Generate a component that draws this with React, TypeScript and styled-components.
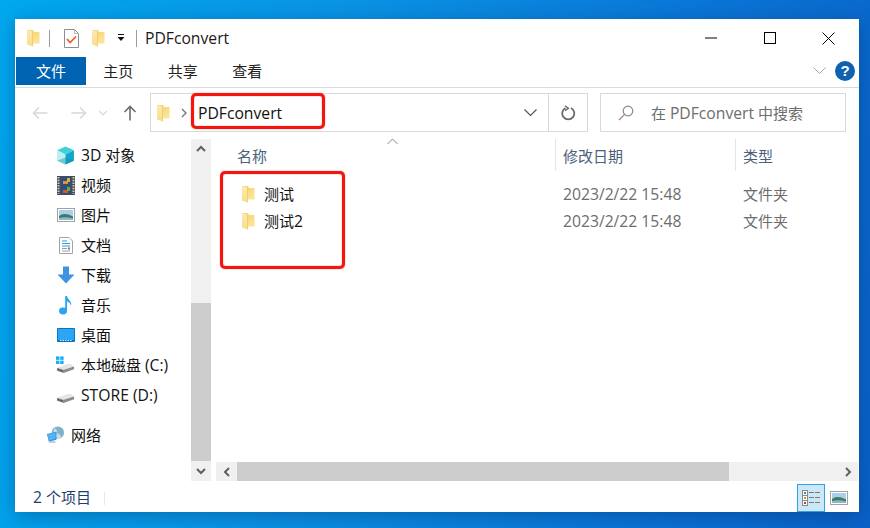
import React from 'react';
import styled, { createGlobalStyle } from 'styled-components';

const GlobalStyle = createGlobalStyle`
  html, body {
    margin: 0;
    padding: 0;
    width: 870px;
    height: 528px;
    overflow: hidden;
  }
  body {
    font-family: "Open Sans", "Noto Sans CJK SC", sans-serif;
    font-size: 15px;
    line-height: 20px;
    color: #000;
    background: linear-gradient(100deg, #00a8ee 0%, #0a94e4 35%, #0a78d8 70%, #0a62c8 100%);
  }
`;

const Desktop = styled.div`
  width: 870px;
  height: 528px;
  box-sizing: border-box;
  padding: 19px 11px 16px 15px;
  display: flex;
`;

const Window = styled.div`
  position: relative;
  flex: 1;
  background: #fff;
  display: flex;
  flex-direction: column;
  box-shadow: 0 4px 18px rgba(0, 30, 80, 0.35);
`;

// Segoe runs wider than Open Sans, so latin runs get a little more size than the CJK around them
const Latin = styled.span`
  font-size: 15.7px;
`;

const TitleBar = styled.div`
  height: 38px;
  display: flex;
  align-items: center;
  padding-left: 11px;
  padding-right: 1.5px;
`;

const QuickIcon = styled.span<{ $ml?: number }>`
  display: flex;
  margin-left: ${(p) => p.$ml ?? 0}px;
`;

const TitleSep = styled.span<{ $ml: number }>`
  width: 1px;
  height: 17px;
  background: #9a9a9a;
  margin-left: ${(p) => p.$ml}px;
`;

const TitleText = styled.span`
  margin-left: 8px;
  font-size: 15.7px;
  color: #1a1a1a;
  flex: 1;
`;

const WindowButton = styled.div`
  width: 58.5px;
  height: 38px;
  display: flex;
  align-items: center;
  justify-content: center;
`;

const Ribbon = styled.div`
  height: 31px;
  box-sizing: border-box;
  display: flex;
  align-items: flex-start;
  border-bottom: 1px solid #dadada;
  padding-left: 1px;
`;

const FileTab = styled.div`
  width: 70px;
  height: 28px;
  background: #0063b1;
  color: #fff;
  display: flex;
  align-items: center;
  justify-content: center;
`;

const RibbonTab = styled.div`
  width: 64.5px;
  height: 28px;
  display: flex;
  align-items: center;
  justify-content: center;
  color: #222;
`;

const RibbonRight = styled.div`
  margin-left: auto;
  height: 28px;
  display: flex;
  align-items: center;
  gap: 9px;
  padding-right: 4px;
`;

const HelpBadge = styled.div`
  width: 20px;
  height: 20px;
  border-radius: 50%;
  background: #0f62ad;
  color: #fff;
  font-family: "Liberation Sans", sans-serif;
  font-weight: bold;
  font-size: 15px;
  display: flex;
  align-items: center;
  justify-content: center;
`;

const NavBar = styled.div`
  height: 51px;
  box-sizing: border-box;
  padding: 5px 13px 6px 0;
  display: flex;
  align-items: flex-start;
`;

const NavArrows = styled.div`
  width: 135px;
  height: 39px;
  display: flex;
  align-items: center;
  padding-left: 17px;
  box-sizing: border-box;
`;

const NavArrow = styled.span<{ $w: number }>`
  width: ${(p) => p.$w}px;
  display: flex;
`;

const AddressBox = styled.div`
  width: 438px;
  height: 39px;
  box-sizing: border-box;
  border: 1px solid #d9d9d9;
  display: flex;
  align-items: center;
  padding-left: 5px;
`;

const Crumb = styled.span`
  margin-left: 9px;
  margin-right: 9px;
  display: flex;
`;

const CrumbText = styled.span`
  font-size: 15.7px;
  color: #111;
  flex: 1;
  padding-top: 1px;
`;

const AddressAction = styled.span<{ $border?: boolean }>`
  width: ${(p) => (p.$border ? 39 : 36)}px;
  height: 37px;
  box-sizing: border-box;
  padding-left: ${(p) => (p.$border ? 1 : 0)}px;
  display: flex;
  align-items: center;
  justify-content: center;
  border-left: ${(p) => (p.$border ? '1px solid #d9d9d9' : 'none')};
`;

const SearchBox = styled.div`
  margin-left: 12px;
  width: 246px;
  height: 39px;
  box-sizing: border-box;
  border: 1px solid #d9d9d9;
  display: flex;
  align-items: center;
  padding-left: 17px;
  color: #6d6d6d;
  gap: 17px;
`;

const Body = styled.div`
  flex: 1;
  min-height: 0;
  display: flex;
`;

const NavPane = styled.div`
  width: 176px;
  padding-top: 1px;
`;

const NavItem = styled.div<{ $indent?: number; $gap?: number }>`
  height: 30px;
  display: flex;
  align-items: center;
  padding-left: ${(p) => p.$indent ?? 41}px;
  margin-top: ${(p) => p.$gap ?? 0}px;
  gap: 6px;
  color: #111;
  white-space: pre;
`;

const NavIcon = styled.span`
  width: 19px;
  height: 19px;
  display: flex;
  align-items: center;
  justify-content: center;
`;

const VScroll = styled.div`
  width: 20px;
  height: 342px;
  background: #f0f0f0;
  display: flex;
  flex-direction: column;
`;

const ScrollButton = styled.div<{ $w?: number }>`
  height: 20px;
  width: ${(p) => (p.$w ? `${p.$w}px` : 'auto')};
  flex: none;
  display: flex;
  align-items: center;
  justify-content: center;
`;

const VSpacer = styled.div`
  height: 144px;
`;

const VThumb = styled.div`
  flex: 1;
  background: #cdcdcd;
`;

const Content = styled.div`
  flex: 1;
  min-width: 0;
  margin-left: 5px;
  display: flex;
  flex-direction: column;
`;

const ColumnGrid = `
  display: grid;
  grid-template-columns: 339px 180px 1fr;
`;

const Header = styled.div`
  ${ColumnGrid}
  height: 33px;
  color: #4c607a;
  position: relative;
`;

const HeaderCell = styled.div<{ $first?: boolean }>`
  display: flex;
  align-items: center;
  height: 32px;
  box-sizing: border-box;
  padding-top: 2px;
  padding-left: ${(p) => (p.$first ? 21 : 7)}px;
  border-left: ${(p) => (p.$first ? 'none' : '1px solid #e5e5e5')};
`;

const SortCaret = styled.span`
  position: absolute;
  left: 171px;
  top: -1px;
  display: flex;
`;

const Rows = styled.div`
  flex: 1;
  padding-top: 8px;
`;

const Row = styled.div`
  ${ColumnGrid}
  height: 27px;
  align-items: center;
  color: #6d6d6d;
`;

const NameCell = styled.div`
  display: flex;
  align-items: center;
  padding-left: 25px;
  gap: 9px;
  color: #111;
  white-space: pre;
`;

const DataCell = styled.div`
  padding-left: 8px;
`;

const HScroll = styled.div`
  height: 19px;
  margin-bottom: 3px;
  background: #f0f0f0;
  display: flex;
  margin-right: 1px;
`;

const HThumb = styled.div`
  width: 492px;
  background: #cdcdcd;
`;

const HTrack = styled.div`
  flex: 1;
`;

const StatusBar = styled.div`
  height: 28px;
  display: flex;
  align-items: center;
  padding-left: 18px;
  color: #1f3f6e;
  white-space: pre;
`;

const StatusText = styled.span`
  margin-bottom: 2px;
`;

const StatusSep = styled.span`
  width: 1px;
  height: 13px;
  background: #e8e8e8;
  margin-left: 13px;
`;

const ViewButtons = styled.div`
  margin-left: auto;
  display: flex;
  align-items: center;
  margin-right: 6px;
`;

const ViewButton = styled.div<{ $active?: boolean }>`
  width: 28px;
  height: 28px;
  box-sizing: border-box;
  display: flex;
  align-items: center;
  justify-content: center;
  border: 1px solid ${(p) => (p.$active ? '#2ea4e6' : 'transparent')};
  background: ${(p) => (p.$active ? '#cce8f7' : 'transparent')};
`;

const Annotation = styled.div<{ $l: number; $t: number; $w: number; $h: number }>`
  position: absolute;
  left: ${(p) => p.$l}px;
  top: ${(p) => p.$t}px;
  width: ${(p) => p.$w}px;
  height: ${(p) => p.$h}px;
  box-sizing: border-box;
  border: 3px solid #f5150f;
  border-radius: 5px;
  box-shadow: 0 0 1px #f5150f, inset 0 0 1px #f5150f;
  pointer-events: none;
`;

function Folder() {
  return (
    <svg width="14" height="18" viewBox="0 0 14 18">
      <defs>
        <linearGradient id="folderBack" x1="0" y1="0" x2="0.4" y2="1">
          <stop offset="0" stopColor="#f6d070" />
          <stop offset="1" stopColor="#fbe596" />
        </linearGradient>
        <linearGradient id="folderFlap" x1="0" y1="0" x2="0" y2="1">
          <stop offset="0" stopColor="#fceab0" />
          <stop offset="1" stopColor="#f9dd8a" />
        </linearGradient>
      </defs>
      <path d="M1 1 H7 L8 3 H13.5 V14.5 H6 Z" fill="url(#folderBack)" />
      <path d="M1 1 L6.5 2.5 V17.5 L1 15.5 Z" fill="url(#folderFlap)" />
      <path d="M6.5 2.5 V17.5" stroke="#efc868" strokeWidth="0.8" />
    </svg>
  );
}

function Arrow({ dir, color }: { dir: 'left' | 'right' | 'up'; color: string }) {
  const rotate = dir === 'left' ? 0 : dir === 'right' ? 180 : 90;
  return (
    <svg width="16" height="16" viewBox="0 0 16 16" style={{ transform: `rotate(${rotate}deg)` }}>
      <path d="M15.5 8 H1.5 M7 2.5 L1.5 8 L7 13.5" fill="none" stroke={color} strokeWidth="1.6" />
    </svg>
  );
}

function Chevron({ dir, color = '#606060', size = 10, width = 2 }: { dir: 'up' | 'down' | 'left' | 'right'; color?: string; size?: number; width?: number }) {
  const points = { up: '1,7 5,3 9,7', down: '1,3 5,7 9,3', left: '7,1 3,5 7,9', right: '3,1 7,5 3,9' }[dir];
  return (
    <svg width={size} height={size} viewBox="0 0 10 10">
      <polyline points={points} fill="none" stroke={color} strokeWidth={width} />
    </svg>
  );
}

function Cube() {
  return (
    <svg width="19" height="19" viewBox="0 0 18 18">
      <path d="M9 0.5 L17 4 L9 8 L1 4 Z" fill="#3fd0da" />
      <path d="M1 4 L9 8 V17.5 L1 14 Z" fill="#bdeff0" />
      <path d="M17 4 L9 8 V17.5 L17 14 Z" fill="#12a6c8" />
      <path d="M1 14 L9 11 L17 14 L9 17.5 Z" fill="#0e92b4" opacity="0.45" />
    </svg>
  );
}

function Film() {
  return (
    <svg width="18" height="19" viewBox="0 0 18 19">
      <rect x="0" y="0" width="18" height="19" fill="#4c4c4c" />
      <path d="M1.5 1 V18 M16.5 1 V18" stroke="#c8c8c8" strokeWidth="2" strokeDasharray="1.5 1.2" />
      <rect x="4" y="1" width="10" height="8" fill="#22508f" />
      <rect x="4" y="10" width="10" height="8" fill="#22508f" />
      <rect x="6" y="5" width="5" height="3" fill="#e8902a" />
      <rect x="6" y="14" width="5" height="3" fill="#d8542a" />
      <rect x="10" y="2" width="3" height="4" fill="#d9b23a" />
      <rect x="10" y="11" width="3" height="4" fill="#7aa03a" />
    </svg>
  );
}

function Picture({ w = 18, h = 14 }: { w?: number; h?: number }) {
  return (
    <svg width={w} height={h} viewBox="0 0 18 14">
      <rect x="0.5" y="0.5" width="17" height="13" fill="#fff" stroke="#a3a3a3" />
      <rect x="2" y="2" width="14" height="10" fill="#a9cfee" />
      <path d="M2 8 Q7 4 16 8.5 V12 H2 Z" fill="#3f7a63" />
      <path d="M2 10 Q9 8.5 16 10.5 V12 H2 Z" fill="#8fb7cb" />
    </svg>
  );
}

function DocIcon() {
  return (
    <svg width="14" height="17" viewBox="0 0 14 17">
      <path d="M0.5 0.5 H10 L13.5 4 V16.5 H0.5 Z" fill="#fff" stroke="#a3a3a3" />
      <path d="M3 4 H8 M3 6.5 H11 M3 9 H11" stroke="#2f9be0" strokeWidth="1" />
      <path d="M3 11.5 H8 M3 14 H11" stroke="#9a9a9a" strokeWidth="1" />
      <rect x="9" y="10.5" width="2" height="2" fill="#5a8a80" />
    </svg>
  );
}

function Download() {
  return (
    <svg width="18" height="18" viewBox="0 0 18 18">
      <path d="M6 0.5 H12 V8.5 H17.5 L9 17.5 L0.5 8.5 H6 Z" fill="#3e94e0" />
    </svg>
  );
}

function Note() {
  return (
    <svg width="14" height="20" viewBox="0 0 14 20">
      <ellipse cx="4" cy="16" rx="4" ry="3.4" fill="#2aa4f0" />
      <path d="M6.2 16 V1 H8 C8.5 5 13.5 6 12 11 C11.5 8 9.5 7 8 6.5 V16 Z" fill="#2aa4f0" />
    </svg>
  );
}

function DesktopIcon() {
  return (
    <svg width="18" height="14" viewBox="0 0 18 14">
      <rect x="0" y="0" width="18" height="14" rx="1" fill="#0a74c4" />
      <rect x="1" y="1" width="16" height="11" fill="#2ba5f4" />
      <path d="M3 12.5 H15" stroke="#cfe9fb" strokeWidth="1" strokeDasharray="1.5 1" />
    </svg>
  );
}

function Drive({ windows }: { windows?: boolean }) {
  return (
    <svg width="20" height="18" viewBox="0 0 20 18">
      {windows && (
        <g fill="#18aef2">
          <rect x="0" y="0" width="3.6" height="3.6" />
          <rect x="4.4" y="0" width="3.6" height="3.6" />
          <rect x="0" y="4.4" width="3.6" height="3.6" />
          <rect x="4.4" y="4.4" width="3.6" height="3.6" />
        </g>
      )}
      <path d="M1 12 L12 8 H15.5 L19 10.5 L8 14 Z" fill="#e6e6e6" />
      <path d="M1 12 L8 14 L19 10.5 V13.5 L8 17.5 L1 15 Z" fill="#8c8c8c" />
      <path d="M2 13 L7 15 V16 L2 14.3 Z" fill="#3c3c3c" />
      <path d="M3 13.8 L5 14.5" stroke="#5cc05c" strokeWidth="0.8" />
    </svg>
  );
}

function Network() {
  return (
    <svg width="20" height="18" viewBox="0 0 20 18">
      <circle cx="12.5" cy="6.5" r="6.5" fill="#7fb2c8" />
      <path d="M9 2 Q13 4 11 7 Q15 8 16 11 L13 13 Q8 10 8 5 Z" fill="#c7dfe9" />
      <path d="M0 7 L10 4.5 V13 L2 15 Z" fill="#2a97e8" transform="translate(1 1)" />
      <path d="M2 8.5 L10 6.5 V13 L3 14.5 Z" fill="#56b4f2" />
      <rect x="3" y="15.5" width="7" height="1.8" fill="#c4c4c4" />
    </svg>
  );
}

function Search() {
  return (
    <svg width="16" height="16" viewBox="0 0 16 16">
      <circle cx="10" cy="6" r="4.8" fill="none" stroke="#8a8a8a" strokeWidth="1.2" />
      <path d="M6.6 9.4 L1 15" stroke="#a88a78" strokeWidth="1.3" />
    </svg>
  );
}

function Refresh() {
  return (
    <svg width="15" height="16" viewBox="0 0 15 16">
      <path d="M10 3 A6 6 0 1 1 4.5 3" fill="none" stroke="#6a6a6a" strokeWidth="1.8" />
      <path d="M4 0.8 L7.4 3.2 L4 5.6" fill="none" stroke="#6a6a6a" strokeWidth="1.4" />
    </svg>
  );
}

function Checklist() {
  return (
    <svg width="15" height="19" viewBox="0 0 15 19">
      <path d="M0.5 0.5 H10.5 L14.5 4.5 V18.5 H0.5 Z" fill="#fff" stroke="#8e8e8e" />
      <path d="M10.5 0.5 V4.5 H14.5" fill="none" stroke="#b5b5b5" />
      <path d="M3 10 L6.2 13.5 L12 7.5" fill="none" stroke="#ea5a26" strokeWidth="1.7" />
    </svg>
  );
}

function DetailsView() {
  return (
    <svg width="19" height="16" viewBox="0 0 19 16">
      <g fill="#fff" stroke="#8a8a8a">
        <rect x="0.5" y="0.5" width="5" height="5" />
        <rect x="0.5" y="5.5" width="5" height="5" />
        <rect x="0.5" y="10.5" width="5" height="5" />
      </g>
      <rect x="2" y="2" width="2" height="2" fill="#4a8a8a" />
      <rect x="2" y="7" width="2" height="2" fill="#c8a020" />
      <rect x="2" y="12" width="2" height="2" fill="#c0401a" />
      <path d="M7 2.5 H12 M13 2.5 H18 M7 7.5 H12 M13 7.5 H18 M7 12.5 H12 M13 12.5 H18" stroke="#7a7a7a" strokeWidth="1" />
    </svg>
  );
}

export default function App() {
  return (
    <>
      <GlobalStyle />
      <Desktop>
        <Window>
          <TitleBar>
            <QuickIcon><Folder /></QuickIcon>
            <TitleSep $ml={9} />
            <QuickIcon $ml={14}><Checklist /></QuickIcon>
            <QuickIcon $ml={12}><Folder /></QuickIcon>
            <QuickIcon $ml={11}>
              <svg width="10" height="8" viewBox="0 0 10 8">
                <path d="M2 0.5 H8" stroke="#111" strokeWidth="1" />
                <path d="M1.5 3 H8.5 L5 7 Z" fill="#111" />
              </svg>
            </QuickIcon>
            <TitleSep $ml={10} />
            <TitleText>PDFconvert</TitleText>
            <WindowButton>
              <svg width="12" height="2" viewBox="0 0 12 2"><path d="M0 1 H12" stroke="#000" /></svg>
            </WindowButton>
            <WindowButton>
              <svg width="12" height="12" viewBox="0 0 12 12"><rect x="0.5" y="0.5" width="11" height="11" fill="none" stroke="#000" /></svg>
            </WindowButton>
            <WindowButton>
              <svg width="13" height="13" viewBox="0 0 13 13"><path d="M0.5 0.5 L12.5 12.5 M12.5 0.5 L0.5 12.5" stroke="#000" /></svg>
            </WindowButton>
          </TitleBar>
          <Ribbon>
            <FileTab>文件</FileTab>
            <RibbonTab>主页</RibbonTab>
            <RibbonTab>共享</RibbonTab>
            <RibbonTab>查看</RibbonTab>
            <RibbonRight>
              <svg width="13" height="8" viewBox="0 0 13 8">
                <path d="M0.5 0.5 L6.5 6.5 L12.5 0.5" fill="none" stroke="#a8a8a8" />
              </svg>
              <HelpBadge>?</HelpBadge>
            </RibbonRight>
          </Ribbon>
          <NavBar>
            <NavArrows>
              <NavArrow $w={39}><Arrow dir="left" color="#d8d8d8" /></NavArrow>
              <NavArrow $w={27}><Arrow dir="right" color="#d8d8d8" /></NavArrow>
              <NavArrow $w={24}><Chevron dir="down" color="#d8d8d8" size={10} width={1.2} /></NavArrow>
              <NavArrow $w={16}><Arrow dir="up" color="#6d6d6d" /></NavArrow>
            </NavArrows>
            <AddressBox>
              <Folder />
              <Crumb><Chevron dir="right" color="#777" size={10} width={1.4} /></Crumb>
              <CrumbText>PDFconvert</CrumbText>
              <AddressAction>
                <svg width="13" height="8" viewBox="0 0 13 8">
                  <path d="M0.5 0.5 L6.5 6.5 L12.5 0.5" fill="none" stroke="#555" strokeWidth="1.2" />
                </svg>
              </AddressAction>
              <AddressAction $border><Refresh /></AddressAction>
            </AddressBox>
            <SearchBox>
              <Search />
              <span>在 <Latin>PDFconvert</Latin> 中搜索</span>
            </SearchBox>
          </NavBar>
          <Body>
            <NavPane>
              <NavItem><NavIcon><Cube /></NavIcon><span><Latin>3D</Latin> 对象</span></NavItem>
              <NavItem><NavIcon><Film /></NavIcon>视频</NavItem>
              <NavItem><NavIcon><Picture /></NavIcon>图片</NavItem>
              <NavItem><NavIcon><DocIcon /></NavIcon>文档</NavItem>
              <NavItem><NavIcon><Download /></NavIcon>下载</NavItem>
              <NavItem><NavIcon><Note /></NavIcon>音乐</NavItem>
              <NavItem><NavIcon><DesktopIcon /></NavIcon>桌面</NavItem>
              <NavItem><NavIcon><Drive windows /></NavIcon><span>本地磁盘 <Latin>(C:)</Latin></span></NavItem>
              <NavItem><NavIcon><Drive /></NavIcon><Latin>STORE (D:)</Latin></NavItem>
              <NavItem $indent={31} $gap={10}><NavIcon><Network /></NavIcon>网络</NavItem>
            </NavPane>
            <VScroll>
              <ScrollButton><Chevron dir="up" /></ScrollButton>
              <VSpacer />
              <VThumb />
              <ScrollButton><Chevron dir="down" /></ScrollButton>
            </VScroll>
            <Content>
              <Header>
                <SortCaret>
                  <svg width="11" height="7" viewBox="0 0 11 7">
                    <path d="M0.5 6 L5.5 1 L10.5 6" fill="none" stroke="#888" />
                  </svg>
                </SortCaret>
                <HeaderCell $first>名称</HeaderCell>
                <HeaderCell>修改日期</HeaderCell>
                <HeaderCell>类型</HeaderCell>
              </Header>
              <Rows>
                <Row>
                  <NameCell><Folder />测试</NameCell>
                  <DataCell><Latin>2023/2/22 15:48</Latin></DataCell>
                  <DataCell>文件夹</DataCell>
                </Row>
                <Row>
                  <NameCell><Folder /><span>测试<Latin>2</Latin></span></NameCell>
                  <DataCell><Latin>2023/2/22 15:48</Latin></DataCell>
                  <DataCell>文件夹</DataCell>
                </Row>
              </Rows>
              <HScroll>
                <ScrollButton $w={21}><Chevron dir="left" /></ScrollButton>
                <HThumb />
                <HTrack />
                <ScrollButton $w={21}><Chevron dir="right" /></ScrollButton>
              </HScroll>
            </Content>
          </Body>
          <StatusBar>
            <StatusText><Latin>2</Latin> 个项目</StatusText>
            <StatusSep />
            <ViewButtons>
              <ViewButton $active><DetailsView /></ViewButton>
              <ViewButton><Picture /></ViewButton>
            </ViewButtons>
          </StatusBar>
          <Annotation $l={176} $t={74} $w={134} $h={36} />
          <Annotation $l={205} $t={152} $w={125} $h={98} />
        </Window>
      </Desktop>
    </>
  );
}
